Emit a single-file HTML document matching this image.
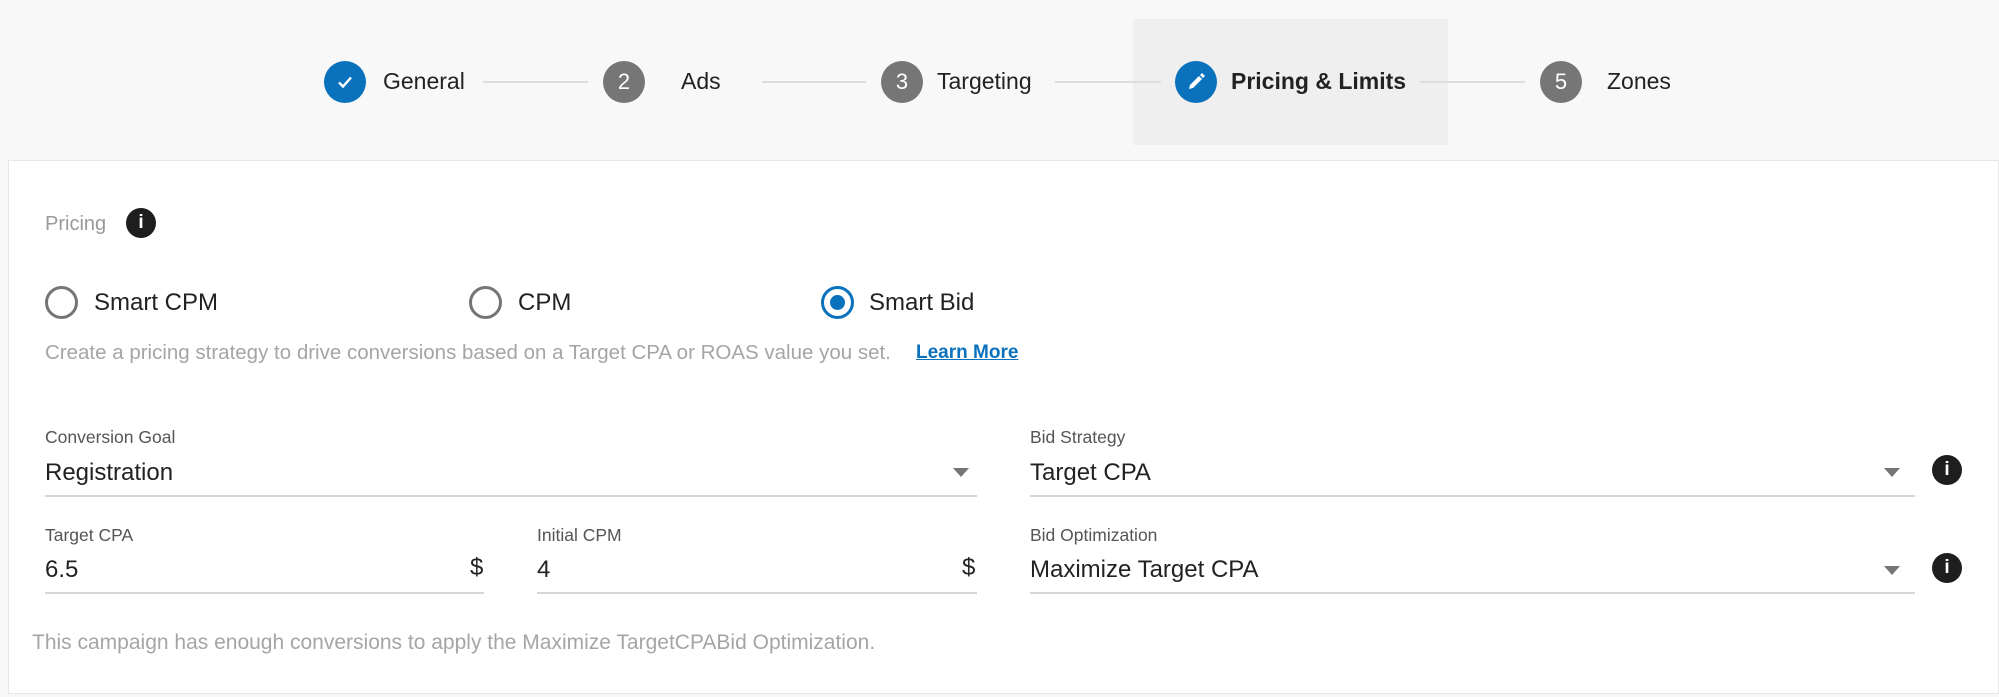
<!DOCTYPE html>
<html><head><meta charset="utf-8"><style>
*{margin:0;padding:0;box-sizing:border-box}
body{width:1999px;height:697px;background:#f8f8f8;font-family:"Liberation Sans",sans-serif;position:relative;overflow:hidden;color:#222}
.a{position:absolute;white-space:nowrap}
.circ{position:absolute;width:42px;height:42px;border-radius:50%;color:#fff;font-size:22px;display:flex;align-items:center;justify-content:center;top:61px}
.line{position:absolute;height:2px;background:#ddd;top:81px}
.st{position:absolute;top:68px;font-size:23px;color:#222}
.card{position:absolute;left:8px;top:160px;width:1991px;height:534px;background:#fff;border:1px solid #e6e6e6}
.radio{position:absolute;width:33px;height:33px;border-radius:50%;border:3px solid #757575;top:286px}
.lbl{font-size:17.5px;color:#555}
.val{font-size:24px;color:#222}
.ul{position:absolute;height:2px;background:#d6d6d6}
.arr{position:absolute;width:0;height:0;border-left:8px solid transparent;border-right:8px solid transparent;border-top:9px solid #757575}
.info{position:absolute;width:30px;height:30px;border-radius:50%;background:#1e1e1e;color:#fff;font-weight:bold;font-size:19px;font-family:"Liberation Sans",sans-serif;display:flex;align-items:center;justify-content:center}
</style></head><body>
<div class="a" style="left:1133px;top:19px;width:315px;height:126px;background:#efefef"></div>
<div class="circ" style="left:324px;background:#0a72bd"><svg width="20" height="20" viewBox="0 0 20 20"><path d="M4 10.5l4 4 8-9" stroke="#fff" stroke-width="2.4" fill="none"/></svg></div>
<div class="st" style="left:383px">General</div>
<div class="line" style="left:483px;width:105px"></div>
<div class="circ" style="left:603px;background:#767676">2</div>
<div class="st" style="left:681px">Ads</div>
<div class="line" style="left:762px;width:104px"></div>
<div class="circ" style="left:881px;background:#767676">3</div>
<div class="st" style="left:937px">Targeting</div>
<div class="line" style="left:1055px;width:106px"></div>
<div class="circ" style="left:1175px;background:#0a72bd"><svg width="22" height="22" viewBox="0 0 22 22"><path d="M4 18l1-4 9-9 3 3-9 9z M15 4l2-2 3 3-2 2z" fill="#fff"/></svg></div>
<div class="st" style="left:1231px;font-weight:bold">Pricing &amp; Limits</div>
<div class="line" style="left:1420px;width:105px"></div>
<div class="circ" style="left:1540px;background:#767676">5</div>
<div class="st" style="left:1607px">Zones</div>

<div class="card"></div>
<div class="a" style="left:45px;top:213px;font-size:20px;color:#9a9a9a">Pricing</div>
<div class="info" style="left:126px;top:208px">i</div>

<div class="radio" style="left:45px"></div>
<div class="a val" style="left:94px;top:289px">Smart CPM</div>
<div class="radio" style="left:469px"></div>
<div class="a val" style="left:518px;top:289px">CPM</div>
<div class="radio" style="left:821px;border-color:#0a72bd"><div style="position:absolute;left:6px;top:6px;width:15px;height:15px;border-radius:50%;background:#0a72bd"></div></div>
<div class="a val" style="left:869px;top:289px">Smart Bid</div>
<div class="a" style="left:45px;top:341px;font-size:20.5px;color:#a5a5a5">Create a pricing strategy to drive conversions based on a Target CPA or ROAS value you set.</div>
<div class="a" style="left:916px;top:342px;font-size:19px;color:#0a72bd;font-weight:bold;text-decoration:underline">Learn More</div>

<div class="a lbl" style="left:45px;top:427px">Conversion Goal</div>
<div class="a val" style="left:45px;top:459px">Registration</div>
<div class="arr" style="left:953px;top:468px"></div>
<div class="ul" style="left:45px;top:495px;width:932px"></div>

<div class="a lbl" style="left:45px;top:525px">Target CPA</div>
<div class="a val" style="left:45px;top:556px">6.5</div>
<div class="a val" style="left:470px;top:554px">$</div>
<div class="ul" style="left:45px;top:592px;width:439px"></div>
<div class="a lbl" style="left:537px;top:525px">Initial CPM</div>
<div class="a val" style="left:537px;top:556px">4</div>
<div class="a val" style="left:962px;top:554px">$</div>
<div class="ul" style="left:537px;top:592px;width:440px"></div>

<div class="a" style="left:32px;top:631px;font-size:21px;color:#a5a5a5">This campaign has enough conversions to apply the Maximize TargetCPABid Optimization.</div>

<div class="a lbl" style="left:1030px;top:427px">Bid Strategy</div>
<div class="a val" style="left:1030px;top:459px">Target CPA</div>
<div class="arr" style="left:1884px;top:468px"></div>
<div class="ul" style="left:1030px;top:495px;width:885px"></div>
<div class="info" style="left:1932px;top:455px">i</div>

<div class="a lbl" style="left:1030px;top:525px">Bid Optimization</div>
<div class="a val" style="left:1030px;top:556px">Maximize Target CPA</div>
<div class="arr" style="left:1884px;top:566px"></div>
<div class="ul" style="left:1030px;top:592px;width:885px"></div>
<div class="info" style="left:1932px;top:553px">i</div>
</body></html>
